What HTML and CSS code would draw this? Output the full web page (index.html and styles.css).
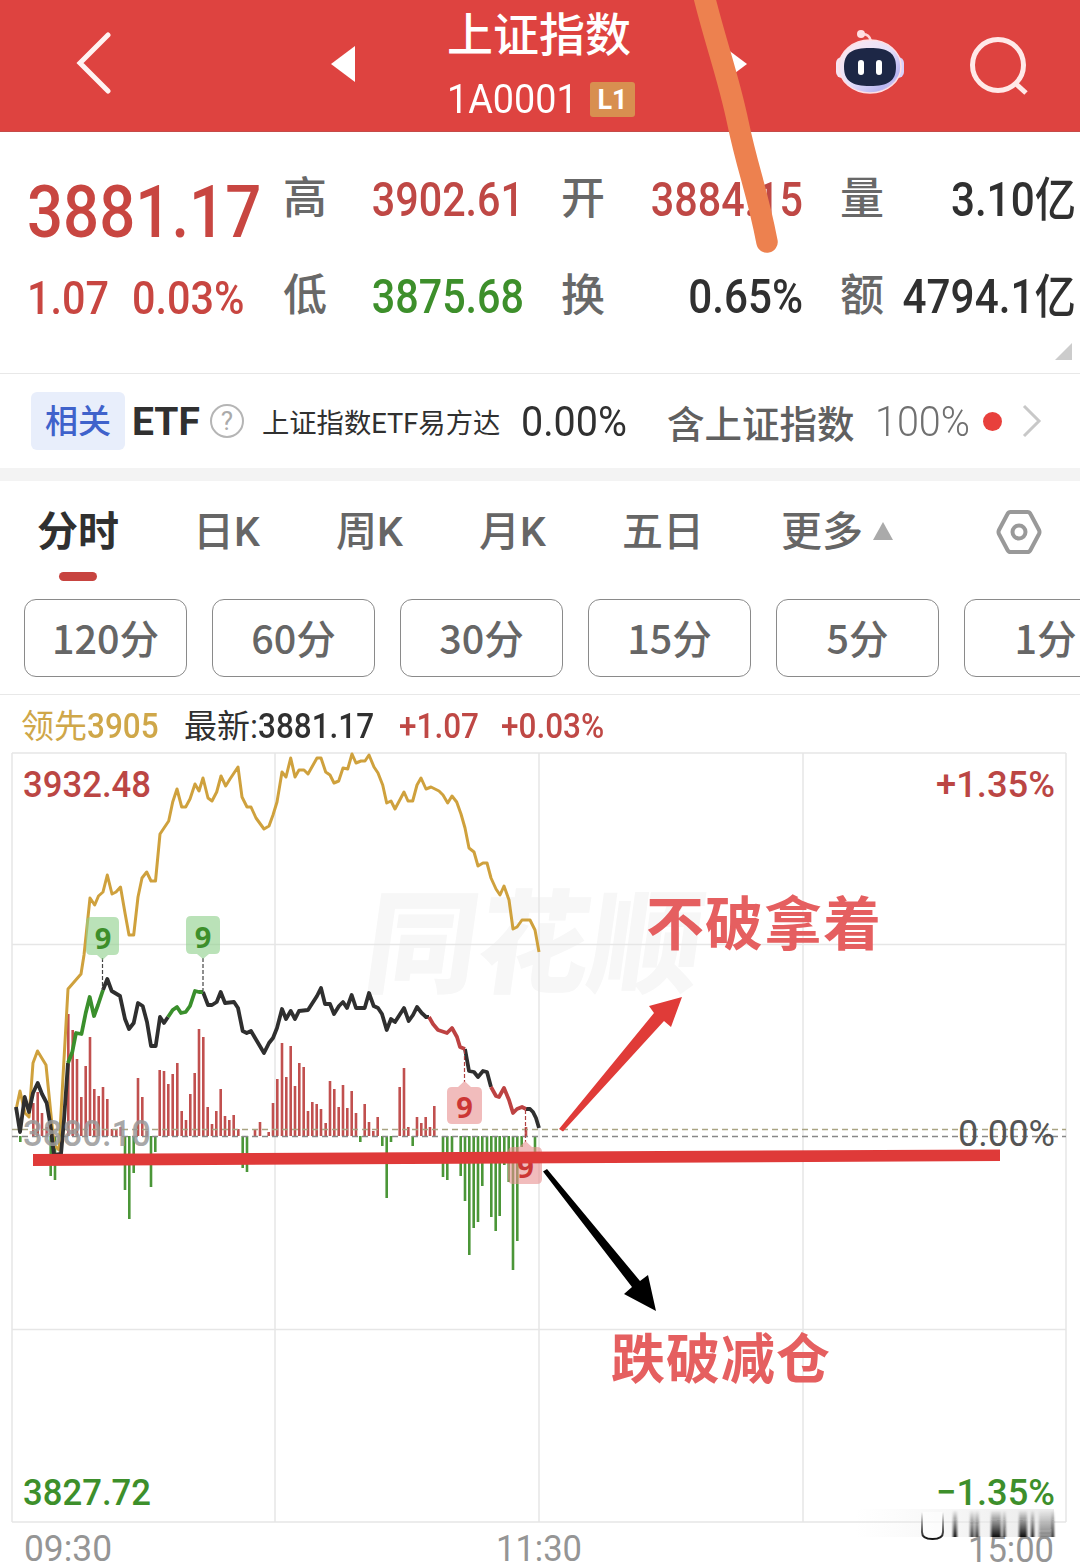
FILE: index.html
```html
<!DOCTYPE html>
<html lang="zh-CN">
<head>
  <meta charset="UTF-8" />
  <meta name="viewport" content="width=device-width, initial-scale=1.0"/>
  <title>上证指数 1A0001</title>
  <link rel="stylesheet" href="styles.css">
</head>
<body>
  <div class="page">
    <header class="topbar">
      <svg class="back" width="36" height="62" viewBox="0 0 36 62"><path d="M32 3 4 31l28 28"/></svg>
      <svg class="arrow" width="24" height="36" viewBox="0 0 24 36"><path d="M24 0v36L0 18z"/></svg>
      <div class="title">
        <h1>上证指数</h1>
        <div class="code"><span class="num">1A0001</span><span class="level">L1</span></div>
      </div>
      <svg class="arrow" width="24" height="36" viewBox="0 0 24 36"><path d="M0 0v36l24-18z"/></svg>
      <svg class="robot" width="68" height="66" viewBox="0 0 68 66">
        <defs>
          <linearGradient id="shell" x1="0" y1="0" x2="1" y2="1">
            <stop offset="0" stop-color="#ffe9ec"/>
            <stop offset=".5" stop-color="#e6e0fa"/>
            <stop offset=".8" stop-color="#b9b6f2"/>
            <stop offset="1" stop-color="#ffdfe4"/>
          </linearGradient>
        </defs>
        <path d="M25 5q8-1 10 7" fill="none" stroke="#ffd5d8" stroke-width="2.5"/>
        <circle cx="25" cy="5" r="4" fill="#ffdfe2"/>
        <rect x="0" y="28" width="12" height="21" rx="6" fill="#f6e4f2"/>
        <rect x="56" y="28" width="12" height="21" rx="6" fill="#d8d2fa"/>
        <ellipse cx="34" cy="37.500" rx="31" ry="26.500" fill="url(#shell)" stroke="#ffdfe4" stroke-width="1.5"/>
        <path d="M34 19c18 0 26 5 26 19s-8 19-26 19S8 52 8 38s8-19 26-19z" fill="#1d2746"/>
        <rect x="22" y="31" width="6" height="15" rx="3" fill="#fff"/>
        <rect x="40" y="31" width="6" height="15" rx="3" fill="#fff"/>
      </svg>
      <svg class="search" width="58" height="58" viewBox="0 0 58 58"><circle cx="28" cy="28" r="25.5"/><path d="m45 46 11 10"/></svg>
    </header>

    <section class="quote">
      <div class="price">
        <div class="last num">3881.17</div>
        <div class="change"><span class="num">1.07</span><span class="num">0.03%</span></div>
      </div>
      <dl class="stats">
        <dt>高</dt><dd class="num up">3902.61</dd>
        <dt>开</dt><dd class="num up">3884.15</dd>
        <dt>量</dt><dd class="num">3.10<small>亿</small></dd>
        <dt>低</dt><dd class="num down">3875.68</dd>
        <dt>换</dt><dd class="num">0.65%</dd>
        <dt>额</dt><dd class="num">4794.1<small>亿</small></dd>
      </dl>
      <span class="corner"></span>
    </section>

    <section class="related">
      <span class="tag">相关</span>
      <b class="etf">ETF</b>
      <span class="help">?</span>
      <span class="fund">上证指数ETF易方达</span>
      <span class="num rate">0.00%</span>
      <span class="holding">含上证指数</span>
      <span class="num ratio">100%</span>
      <i class="dot"></i>
      <svg class="more" width="20" height="34" viewBox="0 0 20 34"><path d="m2 2 15 15L2 32"/></svg>
    </section>

    <nav class="tabs">
      <a class="active">分时</a>
      <a>日K</a>
      <a>周K</a>
      <a>月K</a>
      <a>五日</a>
      <a>更多<i class="tri"></i></a>
      <svg width="46" height="44" viewBox="0 0 46 44"><path d="M14.500 2h17q2 0 3 2l8.500 16q1 2 0 4l-8.500 16q-1 2-3 2h-17q-2 0-3-2L3 24q-1-2 0-4l8.500-16q1-2 3-2z"/><circle cx="23" cy="22" r="6.500"/></svg>
    </nav>

    <div class="periods">
      <button>120分</button>
      <button>60分</button>
      <button>30分</button>
      <button>15分</button>
      <button>5分</button>
      <button>1分</button>
    </div>

    <div class="legend">
      <span class="lead">领先<span class="num">3905</span></span>
      <span class="latest">最新:<span class="num">3881.17</span></span>
      <span class="num up">+1.07</span>
      <span class="num up">+0.03%</span>
    </div>

    <svg class="chart" width="1080" height="814" viewBox="0 748 1080 814">
      <defs>
        <linearGradient id="fade" x1="0" y1="0" x2="0" y2="1">
          <stop offset="0" stop-color="#111" stop-opacity="0"/>
          <stop offset="1" stop-color="#111"/>
        </linearGradient>
        <linearGradient id="haze" x1="0" y1="0" x2="1" y2="0">
          <stop offset="0" stop-color="#eee" stop-opacity="0"/>
          <stop offset="1" stop-color="#e6e6e6"/>
        </linearGradient>
        <filter id="soft" x="-5%" width="110%"><feGaussianBlur stdDeviation="1 0"/></filter>
      </defs>

      <text class="watermark" transform="translate(361 984) skewX(-8)" textLength="336" lengthAdjust="spacingAndGlyphs">同花顺</text>

      <!-- grid -->
      <path class="grid" d="M12 753H1066M12 944.500H1066M12 1329.500H1066M12 1522H1066M12 753V1522M275 753V1522M539 753V1522M803 753V1522M1066 753V1522"/>

      <!-- volume bars around the zero line -->
      <path class="bar-up" d="M33.300 1136V1103M37.700 1136V1092M42 1136V1113M46.700 1136V1127M68.300 1136V1014M72.700 1136V1030M77 1136V1059M81.300 1136V1097M85.700 1136V1066M90 1136V1037M94.300 1136V1089M98.700 1136V1096M103 1136V1087M107.300 1136V1099M112 1136V1129M116.300 1136V1129M120.700 1136V1127M138 1136V1078M142.300 1136V1097M146.700 1136V1131M159.700 1136V1070M164 1136V1071M168.300 1136V1084M172.700 1136V1074M177.300 1136V1063M181.700 1136V1111M186 1136V1120M190.300 1136V1094M194.700 1136V1073M199 1136V1029M203.300 1136V1037M207.700 1136V1107M212 1136V1124M216.300 1136V1111M220.700 1136V1089M225 1136V1116M229.300 1136V1120M233.700 1136V1115M238.300 1136V1129M255 1136V1129M260 1136V1122M268.700 1136V1132M273 1136V1103M277.300 1136V1079M282 1136V1043M286.300 1136V1077M290.700 1136V1046M295 1136V1086M299.300 1136V1063M303.700 1136V1067M308 1136V1111M312.300 1136V1102M316.700 1136V1104M321 1136V1109M325.700 1136V1123M330 1136V1081M334.300 1136V1089M338.700 1136V1107M343 1136V1085M347.300 1136V1108M351.700 1136V1091M356 1136V1113M364.700 1136V1104M369 1136V1122M373.300 1136V1131M377.700 1136V1117M399.700 1136V1087M404 1136V1068M408.300 1136V1127M417 1136V1117M421.300 1136V1123M425.700 1136V1117M430 1136V1127M434.300 1136V1106M526 1136V1127"/>
      <path class="bar-down" d="M20.300 1136V1142M50.700 1136V1176M55 1136V1180M125 1136V1190M129.300 1136V1219M133.700 1136V1173M151 1136V1187M155.300 1136V1152M242.700 1136V1168M247 1136V1172M360.300 1136V1142M382.300 1136V1146M386.700 1136V1198M391 1136V1142M412.700 1136V1146M443 1136V1177M447.300 1136V1180M452 1136V1153M460.700 1136V1176M465 1136V1201M469.300 1136V1255M473.700 1136V1228M478 1136V1222M482.300 1136V1186M487 1136V1160M491.300 1136V1217M495.700 1136V1231M499.700 1136V1216M504.300 1136V1165M508.700 1136V1182M513 1136V1270M517.300 1136V1241M521.700 1136V1147M535 1136V1152"/>

      <path class="dash olive" d="M12 1129.500H1066"/>
      <path class="dash" d="M12 1136.500H1066"/>

      <!-- leading index -->
      <polyline class="line yellow" points="16,1110 20,1091 25,1113 29,1117 33,1063 37.500,1051 46,1065 50,1105 54,1145 59,1150 63,1077 68,989 81,974 84,955 90,898 94.700,905 98.500,896 103,892 107.300,875 112,894 116,892 120.500,887 125,913 129,935 133.700,935 138,897 142,878 146.700,872 151,881 155.500,881 160,834 164,828 168.700,821 172.700,802 177,789 181.700,807 185.700,807 190,799 195,784 199,791 203,778 208,798 212,801 216.700,792 221,776 225.700,786 230,779 234,773 238,767 242,797 247,807 251,807 256,818 264,829 269,826 273,815 277,802 282,772 286,777 290.700,758 295,777 299,770 304,770 308,774 317,758 321,758 325.700,772 330,775 334,783 338.700,781 343,768 347.700,769 352,754 356,763 361,761 365,761 369,755 374,767 378,773 382.700,785 386.700,803 391,801 395,809 404,792 408,801 412.700,801 417,785 421,778 426,789 431,787 439,791 443,795 447.700,803 452,796 456.700,802 461,814 465,828 469,848 474,852 478,866 483,863 487,863 491,878 496,889 500,895 504,886 509,900 513,929 517,927 522,920 530,920 535,930 539,952"/>

      <!-- index -->
      <polyline class="line black" points="16,1107 20,1132 24.700,1097 29,1112 33,1093 37.700,1083 42,1094 46.700,1103 50.700,1127 54,1155 61,1154 64,1120 68,1063"/>
      <polyline class="line black" points="103,990 107.300,979 111.700,991 120,996 125,1019 129,1029 133.700,1023 138,1003 142.700,1006 147,1022 151,1046 155.700,1046 160,1017 164,1023 168,1017"/>
      <polyline class="line black" points="203,992 208,1005 212,1005 216.700,1002 220.700,992 225,1003 234,1002 238,1008 242.700,1031 246.700,1033 251,1031 255.700,1039 264,1053 269,1043 273,1038 277,1028 282,1009 286,1019 290.700,1011 295,1019 299,1011 308,1010 317,996 321,988 325,1004 330,1004 334,1014 339,1006 343,1002 347,1008 351.700,995 356,1008 364.700,1008 369,993 373.700,1006 378,1008 382,1014 386.700,1030 391,1019 395,1022 404,1008 408.700,1021 413,1015 417,1007 421.700,1013 426,1017 429,1017"/>
      <polyline class="line black" points="465,1049 469,1071 474,1072 478,1077 483,1071 487,1072 491,1087"/>
      <polyline class="line black" points="526,1109 530,1109 533,1112 536,1118 539,1128"/>
      <polyline class="line green" points="68,1063 72.300,1052 76,1033 81.500,1034 85.700,1013 89.700,997 94,1016 98,1005 103,990"/>
      <polyline class="line green" points="168,1017 172.700,1010 177,1007 181,1013 185.700,1012 190,1006 195,991 199,992 203,992"/>
      <polyline class="line red" points="429,1017 433,1024 438,1030 447,1033 452,1028 457,1037 460,1047 465,1049"/>
      <polyline class="line red" points="491,1087 496,1096 499,1097 504,1088 509,1100 513,1113 517,1109 522,1107 526,1109"/>

      <!-- nine-turn markers -->
      <path class="stem" d="M102.500 958V990M203 958V992"/>
      <path class="stem red" d="M464.500 1050V1082M525.500 1110V1142"/>
      <path class="mark-buy" d="M91 917h23q5 0 5 5v28q0 5-5 5h-6l-5.500 5-5.500-5h-6q-5 0-5-5v-28q0-5 5-5z"/>
      <path class="mark-buy" d="M191 916h24q5 0 5 5v28q0 5-5 5h-6l-6 5-6-5h-6q-5 0-5-5v-28q0-5 5-5z"/>
      <path class="mark-sell" d="M452 1087h6l6.500-6 6.500 6h6q5 0 5 5v27q0 5-5 5h-25q-5 0-5-5v-27q0-5 5-5z"/>
      <path class="mark-sell" d="M513 1147h6l6.500-6 6.500 6h5q5 0 5 5v27q0 5-5 5h-24q-5 0-5-5v-27q0-5 5-5z"/>
      <text class="nine green" x="103" y="949">9</text>
      <text class="nine green" x="203" y="948">9</text>
      <text class="nine red" x="464.500" y="1118">9</text>
      <text class="nine red" x="525.500" y="1178">9</text>

      <!-- axis labels -->
      <text class="axis red" x="23" y="797" textLength="128" lengthAdjust="spacingAndGlyphs">3932.48</text>
      <text class="axis red" x="936" y="797" textLength="119" lengthAdjust="spacingAndGlyphs">+1.35%</text>
      <text class="axis zero" x="23" y="1146" textLength="128" lengthAdjust="spacingAndGlyphs">3880.10</text>
      <text class="axis pct" x="958" y="1146" textLength="97" lengthAdjust="spacingAndGlyphs">0.00%</text>
      <text class="axis green" x="23" y="1505" textLength="128" lengthAdjust="spacingAndGlyphs">3827.72</text>
      <text class="axis green" x="936" y="1505" textLength="119" lengthAdjust="spacingAndGlyphs">−1.35%</text>
      <text class="axis time" x="24" y="1561" textLength="88" lengthAdjust="spacingAndGlyphs">09:30</text>
      <text class="axis time" x="496" y="1561" textLength="86" lengthAdjust="spacingAndGlyphs">11:30</text>
      <text class="axis time" x="968" y="1562" textLength="86" lengthAdjust="spacingAndGlyphs">15:00</text>

      <!-- smudge in the corner -->
      <rect x="855" y="1509" width="199" height="28" fill="url(#haze)" opacity=".85"/>
      <g fill="url(#fade)" filter="url(#soft)">
        <rect x="953" y="1510" width="4" height="27"/>
        <rect x="970" y="1510" width="4" height="27" opacity=".8"/>
        <rect x="975" y="1510" width="4" height="27" opacity=".8"/>
        <rect x="991" y="1510" width="10" height="27"/>
        <rect x="1003" y="1510" width="2.500" height="27"/>
        <rect x="1019" y="1510" width="8" height="27"/>
        <rect x="1031" y="1510" width="3" height="27"/>
        <rect x="1039" y="1510" width="14" height="27" opacity=".45"/>
        <rect x="1052" y="1510" width="2" height="27"/>
      </g>
      <path d="M922 1512v20q0 7 10.500 7t10.500-7v-20" fill="#fff" fill-opacity=".6" stroke="url(#fade)" stroke-width="2"/>

      <!-- hand-drawn notes -->
      <path d="M33 1154 1000 1149.500V1161L33 1166z" fill="#df3a39"/>
      <path d="M559 1129 654 1013 649 1006 682 997 671 1027 664 1021 563 1131.500z" fill="#e03b38"/>
      <path d="M543 1171.500 547 1169 640 1281 648 1275 656 1311 624 1294 632 1287z" fill="#000"/>
      <text class="note" x="646" y="945" textLength="235" font-size="58">不破拿着</text>
      <text class="note" x="611" y="1379" textLength="219" font-size="54">跌破减仓</text>
    </svg>

    <svg class="brush" width="1080" height="260" viewBox="0 0 1080 260"><path d="M703-8C716 45 728 75 738 123S757 190 767 242"/></svg>
  </div>
</body>
</html>
```
FILE: styles.css
```css
* {
  box-sizing: border-box;
  padding: 0;
  margin: 0;
}

body {
  background-color: #fff;
  color: #303030;
  font-family: Roboto, "Noto Sans CJK SC", sans-serif;
}

.page {
  position: relative;
  width: 1080px;
  height: 1562px;
  overflow: hidden;
}

svg {
  display: block;
}

.num {
  display: inline-block;
  font-weight: 500;
  transform: scaleX(0.9);
  transform-origin: left center;
  white-space: nowrap;
}

.up {
  color: #bf4845;
}

.down {
  color: #3d8f2b;
}

/* header */
.topbar {
  display: grid;
  grid-template-columns: 331px 24px 368px 24px 89px 68px 66px 58px;
  align-items: center;
  height: 132px;
  background-color: #de4340;
  color: #fff;
  border-bottom: 1px solid #c54b49;
}

.back {
  margin: -6px 0 0 76px;
  fill: none;
  stroke: #fff3f2;
  stroke-width: 5;
  stroke-linecap: round;
}

.arrow {
  margin-top: -3px;
  fill: #fff;
}

.title {
  display: flex;
  flex-direction: column;
  align-items: center;
  height: 131px;
}

.title h1 {
  height: 72px;
  font-size: 46px;
  font-weight: 500;
  line-height: 70px;
}

.code {
  display: flex;
  align-items: center;
  width: 188px;
  height: 54px;
  margin-left: 4px;
  font-size: 41px;
}

.code .num {
  width: 143px;
  font-weight: 400;
  transform: scaleX(0.92);
}

.level {
  width: 45px;
  height: 35px;
  border-radius: 3px;
  background-color: #d88f50;
  font-size: 27px;
  font-weight: 700;
  line-height: 36px;
  text-align: center;
}

.robot {
  grid-column: 6;
  margin-top: -8px;
}

.search {
  grid-column: 8;
  fill: none;
  stroke: #ffe9e8;
  stroke-width: 5;
}

/* quote */
.quote {
  position: relative;
  display: flex;
  height: 242px;
  border-bottom: 1px solid #e8e8e8;
}

.price {
  width: 283px;
  padding: 38px 0 0 27px;
  color: #c84641;
}

.last {
  height: 97px;
  font-size: 73px;
  line-height: 84px;
  transform: scaleX(0.87);
}

.change {
  display: grid;
  grid-template-columns: 105px 1fr;
  font-size: 47px;
  line-height: 62px;
}

.change .num {
  transform: scaleX(0.88);
}

.stats {
  display: grid;
  grid-template-columns: 44px 197px 81px 198px 81px 192px;
  grid-template-rows: 97px 97px;
  height: 194px;
  padding-top: 19px;
  line-height: 97px;
}

.stats dt {
  color: #686868;
  font-size: 44px;
  font-weight: 500;
  text-align: right;
}

.stats dd {
  font-size: 48px;
  text-align: right;
  transform: scaleX(0.88);
  transform-origin: right center;
}

.stats small {
  font-size: 47px;
}

.stats .up,
.stats .down {
  transform: scaleX(0.86);
}

/* keep the long turnover value inside its own column */
.stats dd:last-child {
  justify-self: end;
}

.corner {
  position: absolute;
  right: 8px;
  bottom: 13px;
  border-left: 17px solid transparent;
  border-bottom: 17px solid #ccc;
}

/* related etf */
.related {
  display: grid;
  grid-template-columns: 101px 78px 52px 259px 146px 208px 108px 39px 20px;
  align-items: center;
  height: 107px;
  padding-left: 31px;
  border-bottom: 13px solid #f3f3f3;
  white-space: nowrap;
}

.tag {
  width: 94px;
  height: 58px;
  border-radius: 6px;
  background-color: #e8eefb;
  color: #3f62cb;
  font-size: 33px;
  font-weight: 500;
  line-height: 60px;
  text-align: center;
}

.etf {
  padding-top: 2px;
  font-size: 39px;
}

.help {
  width: 34px;
  height: 34px;
  border: 2px solid #b5b5b5;
  border-radius: 50%;
  color: #aaa;
  font-size: 26px;
  line-height: 30px;
  text-align: center;
}

.fund {
  font-size: 27.3px;
}

.rate,
.ratio {
  font-size: 42px;
  font-weight: 400;
  transform: scaleX(0.94);
}

.holding {
  color: #606060;
  font-size: 37.5px;
  font-weight: 500;
}

.ratio {
  color: #707070;
  font-weight: 300;
}

.dot {
  width: 19px;
  height: 19px;
  border-radius: 50%;
  background-color: #e8403c;
}

.more {
  fill: none;
  stroke: #c8c8c8;
  stroke-width: 3;
}

/* tabs */
.tabs {
  display: grid;
  grid-template-columns: 156px 143px 143px 143px 159px 215px 46px;
  height: 118px;
  padding: 20px 0 0 37px;
  color: #666;
  font-size: 41px;
  font-weight: 500;
  line-height: 62px;
}

.tabs .active {
  color: #303030;
  font-weight: 700;
}

.tabs .active::after {
  content: "";
  display: block;
  width: 38px;
  height: 9px;
  margin: 9px 0 0 22px;
  border-radius: 5px;
  background-color: #c74440;
}

.tri {
  display: inline-block;
  margin: 0 0 6px 10px;
  border: 10px solid transparent;
  border-top: 0;
  border-bottom: 18px solid #aaa;
}

.tabs svg {
  margin-top: 9px;
  fill: none;
  stroke: #999;
  stroke-width: 4;
}

.periods {
  display: flex;
  gap: 25px;
  height: 96px;
  padding-left: 24px;
  border-bottom: 1px solid #e8e8e8;
}

.periods button {
  flex: none;
  width: 163px;
  height: 78px;
  padding-bottom: 4px;
  border: 1px solid #8a8a8a;
  border-radius: 12px;
  background-color: #fff;
  color: #666;
  font-family: "Noto Sans CJK SC", sans-serif;
  font-size: 39.5px;
  font-weight: 500;
}

/* legend above the chart */
.legend {
  display: grid;
  grid-template-columns: 163px 215px 102px 1fr;
  height: 53px;
  padding-left: 21px;
  font-size: 33px;
  line-height: 63px;
  white-space: nowrap;
}

.legend .num {
  font-size: 35px;
}

.lead {
  color: #cfa749;
}

/* chart */
.grid {
  fill: none;
  stroke: #e6e6e6;
  stroke-width: 1.5;
}

.watermark {
  fill: #f7f7f7;
  font-family: "Noto Sans CJK SC", sans-serif;
  font-size: 112px;
  font-weight: 900;
}

.bar-up,
.bar-down {
  fill: none;
  stroke: #c1504f;
  stroke-width: 2.6;
}

.bar-down {
  stroke: #4b9638;
}

.dash {
  stroke: #888;
  stroke-width: 1.5;
  stroke-dasharray: 6 4;
}

.dash.olive {
  stroke: #a9a482;
}

.line {
  fill: none;
  stroke-width: 3.8;
  stroke-linejoin: round;
}

.line.yellow {
  stroke: #cfa13d;
  stroke-width: 3;
}

.line.black {
  stroke: #2f2f2f;
}

.line.green {
  stroke: #3a8f2c;
}

.line.red {
  stroke: #bd4242;
}

.stem {
  stroke: #444;
  stroke-width: 1.2;
  stroke-dasharray: 4 2;
}

.stem.red {
  stroke: #b04040;
}

.mark-buy {
  fill: #8fd08c;
  fill-opacity: 0.62;
}

.mark-sell {
  fill: #e88f90;
  fill-opacity: 0.6;
}

.nine {
  font-family: "Noto Sans", sans-serif;
  font-size: 29px;
  font-weight: 700;
  text-anchor: middle;
}

.axis {
  font-size: 37px;
  font-weight: 500;
}

text.red {
  fill: #bb4644;
}

text.green {
  fill: #3d8f2b;
}

.nine.red {
  fill: #cc3635;
}

.axis.zero {
  fill: #999;
  fill-opacity: 0.85;
}

.axis.pct {
  fill: #555;
  font-weight: 400;
}

.axis.time {
  fill: #959595;
  font-weight: 400;
}

.note {
  fill: #e55f60;
  font-family: "Noto Sans CJK SC", sans-serif;
  font-weight: 700;
}

/* brush stroke over the header */
.brush {
  position: absolute;
  top: 0;
  left: 0;
  fill: none;
  stroke: #ed814f;
  stroke-width: 21.5;
  stroke-linecap: round;
}
```
